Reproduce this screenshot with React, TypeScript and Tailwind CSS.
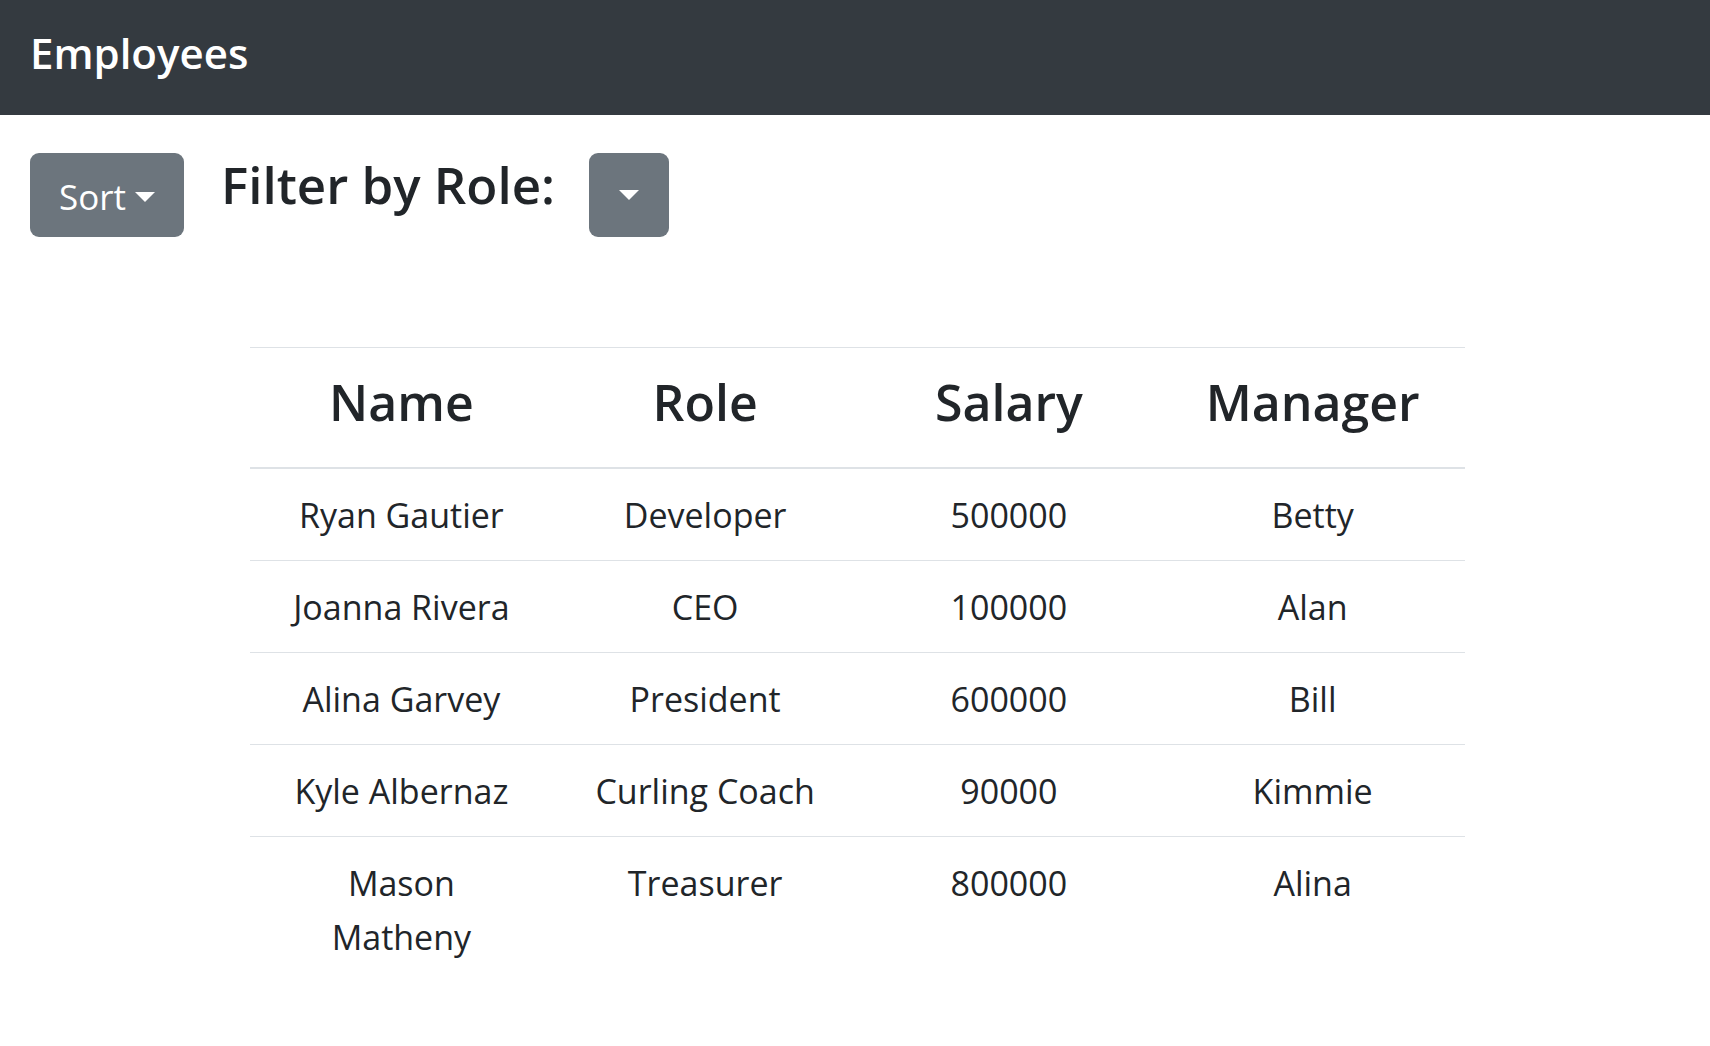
const employees = [
    { name: "Ryan Gautier", role: "Developer", salary: 500000, manager: "Betty" },
    { name: "Joanna Rivera", role: "CEO", salary: 100000, manager: "Alan" },
    { name: "Alina Garvey", role: "President", salary: 600000, manager: "Bill" },
    { name: "Kyle Albernaz", role: "Curling Coach", salary: 90000, manager: "Kimmie" },
    { name: "Mason Matheny", role: "Treasurer", salary: 800000, manager: "Alina" },
];

function Caret() {
    return (
        <span className="inline-block h-0 w-0 border-x-[10px] border-t-[10px] border-x-transparent border-t-white align-[6px]" />
    );
}

export default function App() {
    return (
        <div className="min-h-screen bg-white font-['Open_Sans','Noto_Sans',sans-serif] text-[#212529]">
            <nav className="flex h-[115px] items-center bg-[#343a40] px-[30px] pb-[10px]">
                <span className="text-[42px] font-semibold text-white">Employees</span>
            </nav>

            <div className="flex items-start px-[30px] pt-[38px]">
                <button className="flex h-[84px] items-center gap-[9px] rounded-[9px] bg-[#6c757d] px-[29px] pt-[4px] text-[35px] text-white">
                    Sort
                    <Caret />
                </button>
                <h2 className="ml-[37px] -mt-[6px] text-[51px] font-semibold leading-[74px]">
                    Filter by Role:
                </h2>
                <button className="ml-[34px] flex h-[84px] w-[80px] items-center justify-center rounded-[9px] bg-[#6c757d]">
                    <Caret />
                </button>
            </div>

            <table className="mx-auto mt-[110px] w-[1215px] translate-x-[2px] table-fixed border-collapse text-center">
                <thead>
                    <tr className="border-t border-b-2 border-[#dee2e6]">
                        <th className="h-[120px] pb-[10px] text-[50px] font-semibold">Name</th>
                        <th className="pb-[10px] text-[50px] font-semibold">Role</th>
                        <th className="pb-[10px] text-[50px] font-semibold">Salary</th>
                        <th className="pb-[10px] text-[50px] font-semibold">Manager</th>
                    </tr>
                </thead>
                <tbody className="text-[34px] leading-[54px]">
                    {employees.map((e, i) => (
                        <tr
                            key={e.name}
                            className={i < employees.length - 1 ? "border-b border-[#dee2e6]" : ""}
                        >
                            <td className="px-[40px] pt-[19px] pb-[18px] align-top">{e.name}</td>
                            <td className="px-[20px] pt-[19px] pb-[18px] align-top">{e.role}</td>
                            <td className="px-[20px] pt-[19px] pb-[18px] align-top">{e.salary}</td>
                            <td className="px-[20px] pt-[19px] pb-[18px] align-top">{e.manager}</td>
                        </tr>
                    ))}
                </tbody>
            </table>
        </div>
    );
}
